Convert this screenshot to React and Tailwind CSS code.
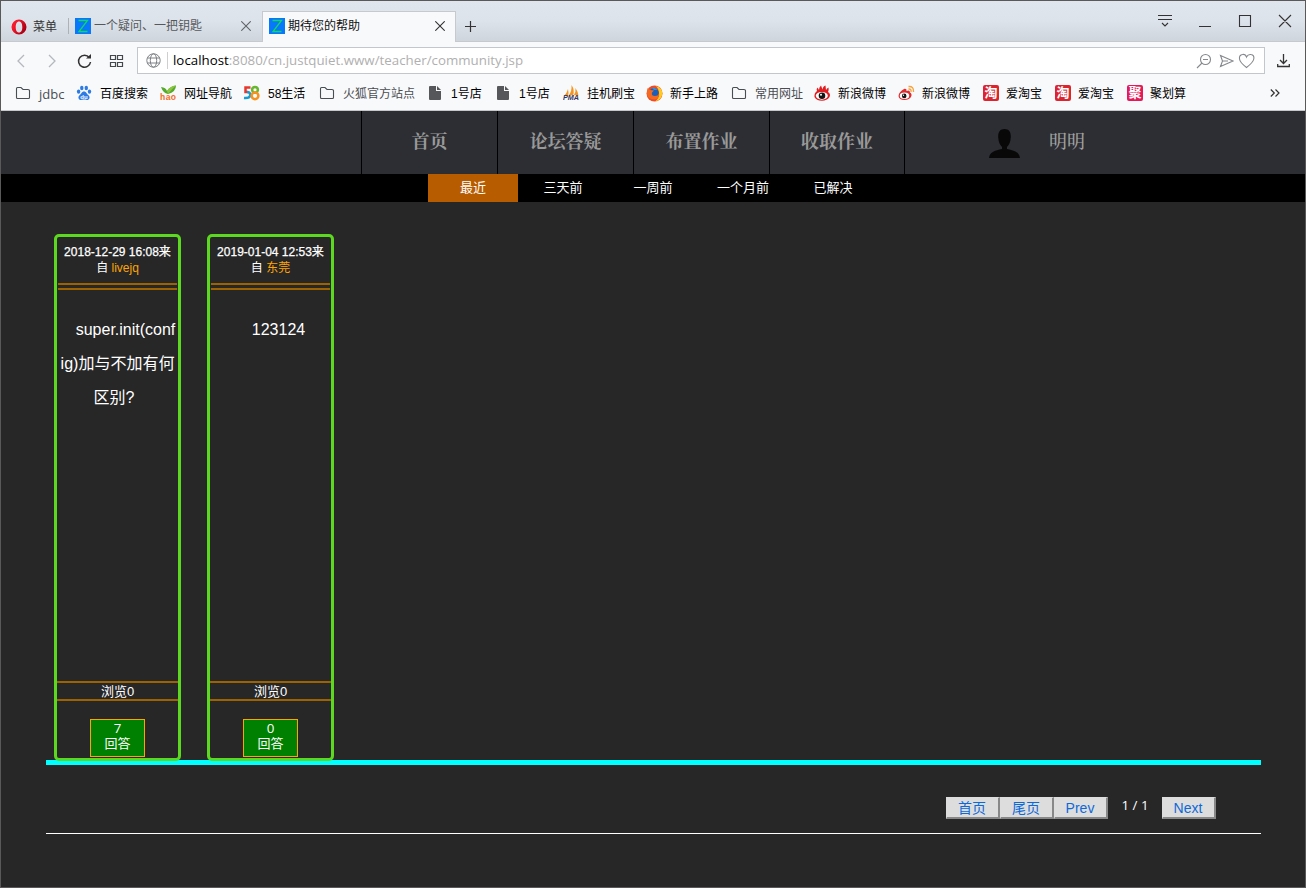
import React from "react";

const Folder = () => (
  <svg width="16" height="16" viewBox="0 0 16 16" fill="none" stroke="#4a4d52" strokeWidth="1.1">
    <path d="M1.500 3.500Q1.500 2.500 2.500 2.500H6L8 4.500H13Q14.500 4.500 14.500 5.500V12.500Q14.500 13.500 13.500 13.500H2.500Q1.500 13.500 1.500 12.500Z" />
  </svg>
);
const Page = () => (
  <svg width="16" height="16" viewBox="0 0 16 16" fill="#55575b">
    <path d="M3 1H9V6H14V14Q14 15 13 15H3Q2 15 2 14V2Q2 1 3 1ZM10 1L14 5H10Z" />
  </svg>
);
const Baidu = () => (
  <svg width="16" height="16" viewBox="0 0 16 16" fill="#2c7be5">
    <ellipse cx="2.6" cy="6.6" rx="1.7" ry="2.2" />
    <ellipse cx="5.8" cy="3" rx="1.7" ry="2.3" />
    <ellipse cx="10.3" cy="3" rx="1.7" ry="2.3" />
    <ellipse cx="13.5" cy="6.6" rx="1.7" ry="2.2" />
    <path d="M8 6.500C5.500 6.500 5.500 9 3.500 10.200C1.500 12 2.500 15 5 15C6.500 15 7 14.600 8 14.600S9.500 15 11 15C13.500 15 14.500 12 12.500 10.200C10.500 9 10.500 6.500 8 6.500Z" />
    <text x="8" y="13.600" textAnchor="middle" fontSize="6" fontWeight="bold" fontFamily="Liberation Sans, sans-serif" fill="#fff">du</text>
  </svg>
);
const Hao = () => (
  <svg width="17" height="16" viewBox="0 0 17 16">
    <path d="M1 2Q6 2.500 7 6Q10 1 16 0.500Q16 7 8 9Q3 8 1 2Z" fill="#55a92c" />
    <path d="M7 6Q10 1 16 0.500Q12 4 8 9Z" fill="#8cc63f" />
    <text x="0" y="15" fontSize="8.500" fontWeight="bold" textLength="16" fontFamily="Liberation Sans, sans-serif" fill="#f36c1f">hao</text>
  </svg>
);
const FiveEight = () => (
  <svg className="-ml-px" width="17" height="16" viewBox="0 0 17 16" fill="none" strokeWidth="2.500">
    <path d="M7.500 2.500H2.500V7H4.500" stroke="#e8372c" />
    <path d="M4 7Q7.500 7 7.200 10.500Q6.500 13.500 1 13" stroke="#169bd5" />
    <circle cx="12" cy="4.800" r="2.900" stroke="#67b72f" />
    <circle cx="12" cy="10.800" r="3.400" stroke="#f6921e" />
  </svg>
);
const Pma = () => (
  <svg width="17" height="16" viewBox="0 0 17 16">
    <path d="M1 11Q4 8 5 4Q6 8 5 11ZM6 10Q9 6 8.500 0Q12 5 10 10.500ZM11 10Q13 7 12.500 3Q15 7 15.500 10.500Z" fill="#f7941d" />
    <text x="0" y="15" fontSize="6.500" fontWeight="bold" fontStyle="italic" textLength="16" lengthAdjust="spacingAndGlyphs" fontFamily="Liberation Sans, sans-serif" fill="#35355f">PMA</text>
  </svg>
);
const Firefox = () => (
  <svg width="17" height="17" viewBox="0 0 17 17">
    <circle cx="8.500" cy="8.500" r="8" fill="#f04a25" />
    <path d="M10 1Q17 3 16.300 9.500Q15 15 9.500 16.300Q14 12 13 8Q13 4 10 1Z" fill="#ffca1e" />
    <circle cx="8" cy="7.800" r="4.800" fill="#1d5fb8" />
    <path d="M1.500 3L4 5L8 5.500L6 7.500Q5 11 9 11Q12 11 13 9Q13 14 8.500 14.500Q1 14 1 8Z" fill="#f36a20" />
    <path d="M6 3Q9 2 11.500 5L8 5Z" fill="#2e94d8" />
  </svg>
);
const Sina = () => (
  <svg width="17" height="16" viewBox="0 0 17 16">
    <path d="M3 6Q2 4 3.500 2.500L5 5Q5 2 7 0.500L8.500 4.500Q9 1 11.500 0.500L12 5Q13 3 14.500 2.500Q15 5 14 7Q17 9 15.500 12Q13 15.800 8 15.800Q2 15.500 0.500 12Q0 8 3 6Z" fill="#e01e22" />
    <ellipse cx="7.800" cy="10.800" rx="6" ry="3.900" fill="#fff" />
    <circle cx="8" cy="10.800" r="3.300" fill="#151515" />
    <circle cx="7" cy="9.800" r="1" fill="#fff" />
  </svg>
);
const Weibo = () => (
  <svg width="17" height="16" viewBox="0 0 17 16">
    <path d="M0.500 11Q1 6.500 6.500 3.800Q9 3.500 8.500 6Q12 4.500 12 7.500Q14.500 9 13 12Q11 15 6.500 15Q1 15 0.500 11Z" fill="#e42a2d" />
    <ellipse cx="6.500" cy="10.800" rx="4.700" ry="3.200" fill="#fff" />
    <circle cx="6.200" cy="10.900" r="2.300" fill="#151515" />
    <circle cx="5.500" cy="10.200" r="0.700" fill="#fff" />
    <path d="M10.500 1.500Q16 1 15.500 7M10.500 4Q13.500 3.700 13 6.800" stroke="#f7a23b" strokeWidth="1.400" fill="none" />
  </svg>
);
const Tao = () => (
  <span className="ml-px flex size-4 items-center justify-center rounded-[2px] bg-[#dc2430] text-[13px] leading-4 font-bold text-white">淘</span>
);
const Ju = () => (
  <span className="ml-px flex size-4 items-center justify-center rounded-[2px] bg-[#e51858] text-[13px] leading-4 font-bold text-white">聚</span>
);
const ZIcon = () => (
  <svg className="shrink-0" width="16" height="16" viewBox="0 0 16 16">
    <rect width="16" height="16" fill="#0878fa" />
    <path d="M3.500 2.500H12.500L4 13.500H12.500" stroke="#10d868" strokeWidth="1.300" fill="none" />
  </svg>
);
const Cross = ({ size = 10, color = "#606468" }) => (
  <svg width={size} height={size} viewBox="0 0 10 10" stroke={color} strokeWidth="1.100">
    <path d="M0.300 0.300L9.700 9.700M9.700 0.300L0.300 9.700" />
  </svg>
);

const bookmarks = [
  { icon: Folder, text: "jdbc", w: "w-[61px]", cls: "text-[#4a4d52] text-[13px] font-['Open_Sans',sans-serif]" },
  { icon: Baidu, text: "百度搜索", w: "w-[84px]" },
  { icon: Hao, text: "网址导航", w: "w-[84px]" },
  { icon: FiveEight, text: "58生活", w: "w-[75px]" },
  { icon: Folder, text: "火狐官方站点", w: "w-[108px]", cls: "text-[#4a4d52]" },
  { icon: Page, text: "1号店", w: "w-[68px]" },
  { icon: Page, text: "1号店", w: "w-[68px]" },
  { icon: Pma, text: "挂机刷宝", w: "w-[83px]" },
  { icon: Firefox, text: "新手上路", w: "w-[85px]" },
  { icon: Folder, text: "常用网址", w: "w-[83px]", cls: "text-[#4a4d52]" },
  { icon: Sina, text: "新浪微博", w: "w-[84px]" },
  { icon: Weibo, text: "新浪微博", w: "w-[84px]" },
  { icon: Tao, text: "爱淘宝", w: "w-[72px]" },
  { icon: Tao, text: "爱淘宝", w: "w-[72px]" },
  { icon: Ju, text: "聚划算", w: "w-[72px]" },
];

function TabStrip() {
  return (
    <div className="flex h-[41px] border-b border-[#c6c9cd] bg-gradient-to-b from-[#e0e6ee] via-[#dde3eb] to-[#cfd5dc] text-[12px]">
      <div className="flex h-full w-[67px] items-center pt-[11px] pl-[10px]">
        <svg width="16" height="16" viewBox="0 0 16 16">
          <defs>
            <linearGradient id="opera" x1="0" y1="0" x2="1" y2="0.600">
              <stop offset="0.300" stopColor="#f8192b" />
              <stop offset="1" stopColor="#a70014" />
            </linearGradient>
          </defs>
          <path fillRule="evenodd" fill="url(#opera)" d="M8 0.500A7.500 7.500 0 1 0 8 15.500A7.500 7.500 0 1 0 8 0.500ZM8 2.500C10.400 2.500 11.300 5 11.300 8S10.400 13.500 8 13.500S4.700 11 4.700 8S5.600 2.500 8 2.500Z" />
        </svg>
        <span className="ml-[6px] text-[#333]">菜单</span>
      </div>
      <div className="mt-[17px] h-4 w-px bg-[#aeb2b8]" />
      <div className="flex w-[193px] items-center pt-[9px] pr-[11px] pl-[6px]">
        <ZIcon />
        <span className="ml-[3px] flex-1 whitespace-nowrap text-[#55585c]">一个疑问、一把钥匙</span>
        <Cross />
      </div>
      <div className="mt-[10px] flex h-[31px] w-[194px] items-center border border-b-0 border-[#c6c9cd] bg-[#f8f9fb] pr-[10px] pb-[3px] pl-[6px]">
        <ZIcon />
        <span className="ml-[3px] flex-1 whitespace-nowrap text-[#111]">期待您的帮助</span>
        <Cross color="#333" />
      </div>
      <svg className="mt-[19px] ml-[8px]" width="13" height="13" viewBox="0 0 13 13" stroke="#333" strokeWidth="1.200">
        <path d="M6.500 1V12M1 6.500H12" />
      </svg>
      <div className="ml-auto flex pt-[13px] pr-[12px]">
        <svg width="136" height="14" viewBox="0 0 136 14" fill="none" stroke="#333" strokeWidth="1.100">
          <path d="M1 1.500H15M1 5.500H15M5 9L8 12L11 9M42 12.500H54M82.500 1.500H93.500V12.500H82.500ZM122 1L134 13M134 1L122 13" />
        </svg>
      </div>
    </div>
  );
}

function AddressBar() {
  return (
    <div className="flex h-[37px] items-center">
      <svg className="ml-[15px] shrink-0" width="110" height="16" viewBox="0 0 110 16" fill="none" strokeWidth="1.300">
        <path d="M8 2L2 8L8 14M33 2L39 8L33 14" stroke="#b4b8bd" />
        <path d="M73.300 4.500A6 6 0 1 0 74.500 9" stroke="#333" strokeWidth="1.500" />
        <path d="M70 5.500H75V1Z" fill="#333" />
        <path d="M94.500 2.500H99.500V6.500H94.500ZM101.500 2.500H106.500V6.500H101.500ZM94.500 9.500H99.500V13.500H94.500ZM101.500 9.500H106.500V13.500H101.500Z" stroke="#44474b" strokeWidth="1.200" />
      </svg>
      <div className="ml-[11px] flex h-[27px] w-[1128px] shrink-0 items-center border border-[#c3c6ca] bg-white pl-[8px]">
        <svg width="15" height="15" viewBox="0 0 15 15" fill="none" stroke="#7d8084">
          <circle cx="7.500" cy="7.500" r="6.700" />
          <ellipse cx="7.500" cy="7.500" rx="3.200" ry="6.700" />
          <path d="M1.500 5H13.500M1.500 10H13.500" />
        </svg>
        <span className="mr-[5px] ml-[6px] h-[17px] w-px bg-[#cfcfcf]" />
        <span className="font-['Open_Sans',sans-serif] text-[13.3px] tracking-[0.01px] whitespace-nowrap text-[#b0b0b0]">
          <span className="text-black">localhost</span>:8080/cn.justquiet.www/teacher/community.jsp
        </span>
        <svg className="mr-[9px] ml-auto" width="59" height="16" viewBox="0 0 59 16" fill="none" stroke="#85888c" strokeWidth="1.100">
          <circle cx="9.500" cy="6.500" r="5" />
          <path d="M7 6.500H12M6 10L1 15M24.500 2.500L37 8L24.500 13.500L26.500 8ZM26.500 8H32M50.500 14.500Q44 9.500 43.500 6Q43 2 46.500 1.500Q49.500 1 50.500 4Q52 1 55 1.500Q58.500 2 57.800 6Q57 9.500 50.500 14.500Z" />
        </svg>
      </div>
      <svg className="ml-[12px]" width="14" height="14" viewBox="0 0 14 14" fill="none" stroke="#333" strokeWidth="1.300">
        <path d="M6.500 0V9M3 6L6.500 9.500L10 6M0.700 10V12.500H12.300V10" />
      </svg>
    </div>
  );
}

function Bookmarks() {
  return (
    <div className="flex h-[32px] items-center border-b border-[#c6c8ca] pb-[3px] pl-[14px] text-[12px] text-black">
      {bookmarks.map(({ icon: Icon, text, w, cls = "" }, i) => (
        <div key={i} className={`flex shrink-0 items-center ${w} ${cls}`}>
          <span className="flex w-6 shrink-0"><Icon /></span>
          <span className="pt-[2px] leading-4 whitespace-nowrap">{text}</span>
        </div>
      ))}
      <svg className="mr-[25px] ml-auto" width="10" height="8" viewBox="0 0 10 8" fill="none" stroke="#333" strokeWidth="1.200">
        <path d="M0.800 0.500L4.300 4L0.800 7.500M5.500 0.500L9 4L5.500 7.500" />
      </svg>
    </div>
  );
}

const subItems = ["最近", "三天前", "一周前", "一个月前", "已解决"];

function SiteNav() {
  return (
    <>
      <nav className="flex h-[63px] bg-[#2d2e33] pl-[360px] font-['Liberation_Serif','Noto_Serif_CJK_SC','Noto_Sans_CJK_SC',serif] text-[18px] leading-[62px] font-bold text-[#999]">
        <div className="w-[136px] border-l border-black text-center">首页</div>
        <div className="w-[136px] border-l border-black text-center">论坛答疑</div>
        <div className="w-[136px] border-l border-black text-center">布置作业</div>
        <div className="w-[135px] border-l border-black text-center">收取作业</div>
        <div className="flex border-l border-black pl-[84px] font-normal">
          <svg className="mt-[18px]" width="31" height="29" viewBox="0 0 31 29" fill="#080808">
            <path d="M15.500 0C20 0 22 3 21.800 8C21.600 13 20 16 18 18V20C25 21.500 30 22.500 31 29H0C1 22.500 6 21.500 13 20V18C11 16 9.400 13 9.200 8C9 3 11 0 15.500 0Z" />
          </svg>
          <span className="ml-[29px] font-medium text-[#a0a0a0]">明明</span>
        </div>
      </nav>
      <div className="flex h-[28px] bg-black pl-[427px] text-[13px] leading-[28px] text-white">
        {subItems.map((t, i) => (
          <div key={t} className={`w-[90px] text-center ${i === 0 ? "bg-[#b85c00]" : ""}`}>{t}</div>
        ))}
      </div>
    </>
  );
}

function Card({ date, from, count, children }) {
  return (
    <article className="flex h-[527px] w-[127px] flex-col rounded-[5px] border-3 border-[#5bd81f] text-center text-white">
      <header className="mx-px h-[53px] pt-[7px] text-[12px] leading-4 whitespace-nowrap">
        <div className="h-4 [-webkit-text-stroke:0.25px_white]">{date}来</div>
        <div className="h-4">自 <span className="text-[#ffa500]">{from}</span></div>
      </header>
      <div className="mx-px -mt-[7px] h-[7px] border-y-2 border-[#9c6300]" />
      <div className="mt-[23px] flex-1 text-[16px] leading-[34px] whitespace-nowrap">{children}</div>
      <div className="h-[20px] border-y-2 border-[#9c6300] text-[13px] leading-[17px] whitespace-nowrap">浏览0</div>
      <div className="mx-auto mt-[18px] mb-px h-[38px] w-[55px] border border-[#ffa500] bg-[#008000] text-[13.3px] leading-4">
        <div className="h-4 font-['Open_Sans',sans-serif] leading-[17px]">{count}</div>
        <div className="text-[13px]">回答</div>
      </div>
    </article>
  );
}

const PagerButton = ({ children }) => (
  <button className="h-[22px] w-[54px] border-t border-r-2 border-b-2 border-l border-t-[#ddd] border-r-[#888] border-b-[#888] border-l-[#ddd] bg-[#ddd] pr-px text-center text-[14px] leading-[20px] text-[#0e69d8]">
    {children}
  </button>
);

export default function App() {
  return (
    <div className="flex h-[888px] w-[1306px] flex-col overflow-hidden border border-[#5a5858] bg-[#f8f9fb] font-['Liberation_Sans','Noto_Sans_CJK_SC',sans-serif]">
      <TabStrip />
      <AddressBar />
      <Bookmarks />
      <SiteNav />
      <main className="flex-1 bg-[#272727] px-[45px] pt-[32px]">
        <section className="w-[1215px]">
          <div className="relative z-10 -mb-px flex gap-[26px] pl-[8px]">
            <Card date="2018-12-29 16:08" from="livejq" count="7">
              <p className="pl-[16px]">super.init(conf</p>
              <p>ig)加与不加有何</p>
              <p className="pr-[7px]">区别?</p>
            </Card>
            <Card date="2019-01-04 12:53" from="东莞" count="0">
              <p className="pl-[16px]">123124</p>
            </Card>
          </div>
          <div className="h-[5px] bg-[#00ffff]" />
          <div className="flex h-[69px] items-start justify-end border-b border-white pt-[32px] pr-[45px]">
            <PagerButton>首页</PagerButton>
            <PagerButton>尾页</PagerButton>
            <PagerButton>Prev</PagerButton>
            <span className="w-[54px] text-center font-['Open_Sans',sans-serif] text-[13.3px] leading-[17px] text-white">1 / 1</span>
            <PagerButton>Next</PagerButton>
          </div>
        </section>
      </main>
    </div>
  );
}
